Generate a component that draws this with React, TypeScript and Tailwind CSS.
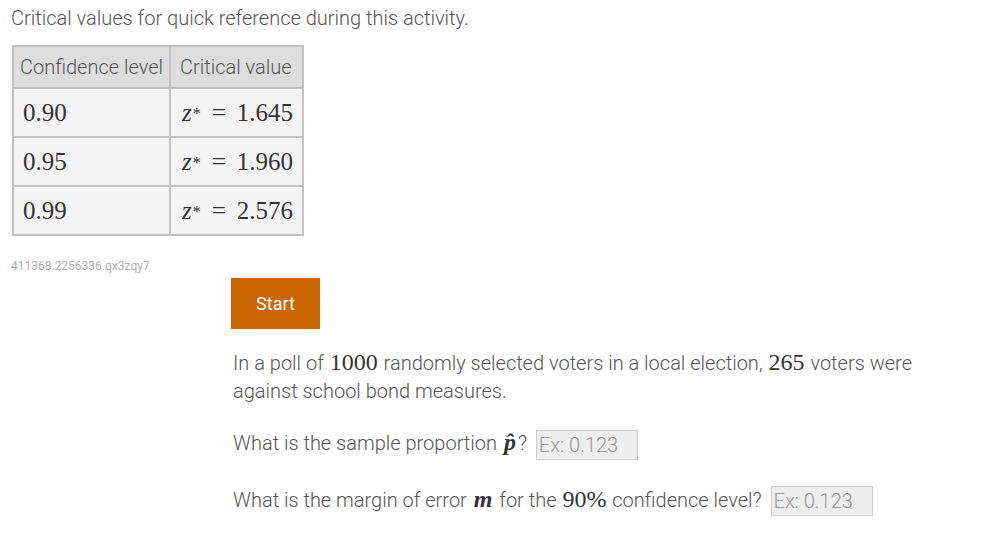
import React from "react";

const serif = "font-['Liberation_Serif','DejaVu_Serif',serif]";

function Z({ v }: { v: string }) {
  return (
    <span className={`${serif} text-[25px] text-[#333]`}>
      <i>z</i>
      <sup className="text-[16px] relative -top-[2px] ml-[1px]">*</sup>
      <span className="mx-[11px]">=</span>
      {v}
    </span>
  );
}

function Input() {
  return (
    <input
      placeholder="Ex: 0.123"
      className="ml-[4px] w-[102px] h-[30px] bg-[#eeeeee] border border-[#cccccc] px-[2px] text-[20px] text-[#555] placeholder:text-[#999] font-['Roboto',sans-serif] font-light outline-none align-middle"
    />
  );
}

export default function App() {
  const rows = [
    ["0.90", "1.645"],
    ["0.95", "1.960"],
    ["0.99", "2.576"],
  ];
  return (
    <div className="font-['Roboto',sans-serif] font-light text-[#555] px-[11px] pt-[4px] bg-white min-h-[549px]">
      <p className="text-[20px] leading-[28px]">
        Critical values for quick reference during this activity.
      </p>
      <table className="mt-[13px] ml-[1px] border-collapse border-2 border-[#c2c2c2]">
        <thead>
          <tr className="bg-[#dddddd] h-[42px]">
            <th className="border-2 border-[#c2c2c2] font-light text-[20px] text-left pl-[6px] pr-[4px] w-[157px] whitespace-nowrap">
              Confidence level
            </th>
            <th className="border-2 border-[#c2c2c2] font-light text-[20px] text-left pl-[9px] pr-[9px] w-[133px] whitespace-nowrap">
              Critical value
            </th>
          </tr>
        </thead>
        <tbody>
          {rows.map(([a, b]) => (
            <tr key={a} className="bg-[#f4f4f4] h-[49px]">
              <td className="border-2 border-[#c2c2c2] pl-[9px]">
                <span className={`${serif} text-[25px] text-[#333]`}>{a}</span>
              </td>
              <td className="border-2 border-[#c2c2c2] pr-[9px] text-right whitespace-nowrap">
                <Z v={b} />
              </td>
            </tr>
          ))}
        </tbody>
      </table>
      <div className="mt-[22px] text-[12px] text-[#b0b0b0] font-normal leading-[16px]">
        411368.2256336.qx3zqy7
      </div>
      <div className="pl-[222px] mt-[4px]">
        <button className="-ml-[2px] w-[89px] h-[51px] bg-[#cc6600] text-white text-[18px] font-normal">
          Start
        </button>
        <p className="mt-[19px] text-[20px] leading-[28px] w-[720px]">
          In a poll of <span className={`${serif} text-[24px] text-[#333] mx-[1px]`}>1000</span> randomly selected voters in a local election,{" "}
          <span className={`${serif} text-[24px] text-[#333] mx-[1px]`}>265</span> voters were against school bond measures.
        </p>
        <p className="mt-[23px] text-[20px] leading-[28px]">
          What is the sample proportion{" "}
          <span className={`${serif} text-[24px] text-[#333] font-bold italic mx-[2px]`}>p̂</span>?{" "}
          <Input />
        </p>
        <p className="mt-[25px] text-[20px] leading-[28px]">
          What is the margin of error{" "}
          <span className={`${serif} text-[24px] text-[#333] font-bold italic mx-[2px]`}>m</span> for the{" "}
          <span className={`${serif} text-[24px] text-[#333] mx-[1px]`}>90%</span> confidence level?{" "}
          <Input />
        </p>
      </div>
    </div>
  );
}
